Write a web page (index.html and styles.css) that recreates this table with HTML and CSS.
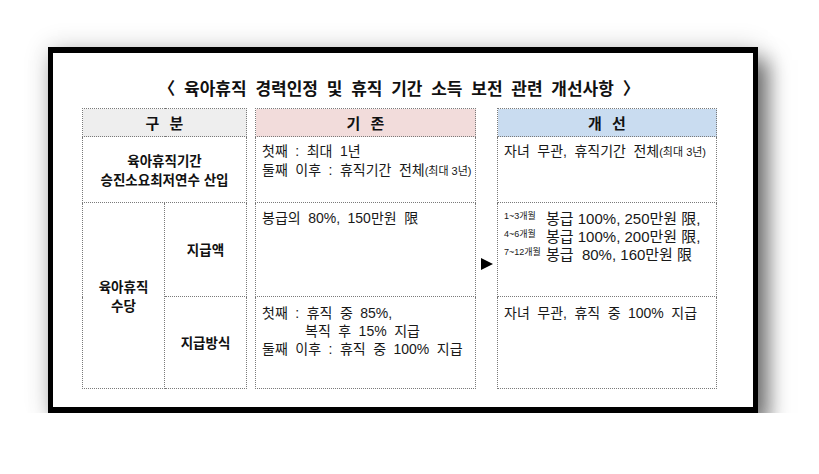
FILE: index.html
```html
<!DOCTYPE html>
<html lang="ko">
<head>
<meta charset="utf-8">
<link rel="stylesheet" href="styles.css">
</head>
<body>
<div class="page">
  <div class="frame">
    <div class="content">
      <div class="title">〈 육아휴직 경력인정 및 휴직 기간 소득 보전 관련 개선사항 〉</div>
      <table class="grid">
        <colgroup>
          <col class="w-a"><col class="w-b"><col class="w-gap"><col class="w-mid"><col class="w-arrow"><col class="w-new">
        </colgroup>
        <tr class="r-head">
          <td colspan="2" class="head head-gray">구 분</td>
          <td rowspan="4" class="gap"></td>
          <td class="head head-pink">기 존</td>
          <td rowspan="4" class="gap arrow-cell">
            <svg class="arrow" width="12" height="12" viewBox="0 0 12 12"><polygon points="0,0 12,6 0,12" fill="#000"/></svg>
          </td>
          <td class="head head-blue">개 선</td>
        </tr>
        <tr class="r-1">
          <td colspan="2" class="label">육아휴직기간<br>승진소요최저연수 산입</td>
          <td class="body p-a">첫째 : 최대 1년<br>둘째 이후 : 휴직기간 전체<span class="small">(최대 3년)</span></td>
          <td class="body p-a">자녀 무관, 휴직기간 전체<span class="small">(최대 3년)</span></td>
        </tr>
        <tr class="r-2">
          <td rowspan="2" class="label">육아휴직<br>수당</td>
          <td class="label">지급액</td>
          <td class="body p-b">봉급의 80%, 150만원 限</td>
          <td class="body p-c">
            <div class="tier"><span class="sup">1~3개월</span><span class="big">봉급 100%, 250만원 限,</span></div>
            <div class="tier"><span class="sup">4~6개월</span><span class="big">봉급 100%, 200만원 限,</span></div>
            <div class="tier"><span class="sup">7~12개월</span><span class="big">봉급 &nbsp;80%, 160만원 限</span></div>
          </td>
        </tr>
        <tr class="r-3">
          <td class="label">지급방식</td>
          <td class="body p-d">첫째 : 휴직 중 85%,<br><span class="indent">복직 후 15% 지급</span><br>둘째 이후 : 휴직 중 100% 지급</td>
          <td class="body p-e">자녀 무관, 휴직 중 100% 지급</td>
        </tr>
      </table>
    </div>
  </div>
</div>
</body>
</html>
```
FILE: styles.css
```css
html, body {
  margin: 0;
  background: #ffffff;
}
body {
  font-family: "Noto Sans CJK KR", "Noto Sans", sans-serif;
  color: #1c1c1c;
}
.page {
  padding: 47px 0 0 48px;
}
.frame {
  box-sizing: content-box;
  width: 700px;
  height: 354px;
  border-style: solid;
  border-color: #000;
  border-width: 6px 5px;
  background: #fff;
  box-shadow: 10px 13px 20px rgba(0, 0, 0, 0.55), 0 0 24px rgba(0, 0, 0, 0.16);
}
.content {
  width: 634px;
  margin-left: 29px;
}
.title {
  margin: 24px 0 10px 0;
  text-align: center;
  font-size: 17px;
  line-height: 21px;
  font-weight: 700;
  word-spacing: 4px;
  color: #111;
  white-space: nowrap;
}
.grid {
  border-collapse: collapse;
  table-layout: fixed;
  width: 634px;
}
.w-a { width: 82px; }
.w-b { width: 82px; }
.w-gap { width: 9px; }
.w-mid { width: 220px; }
.w-arrow { width: 22px; }
.w-new { width: 219px; }
.grid td {
  border: 1px dotted #7a7a7a;
  padding: 0;
  font-size: 14px;
}
.grid td.gap {
  border: none;
}
.r-head { height: 28px; }
.r-1 { height: 66px; }
.r-2 { height: 94px; }
.r-3 { height: 92px; }
.head {
  text-align: center;
  vertical-align: middle;
  font-weight: 700;
  font-size: 15px !important;
  word-spacing: 6px;
  color: #111;
}
.head-gray { background: #eeeeee; }
.head-pink { background: #f2dcdb; }
.head-blue { background: #c9dcf0; }
.label {
  text-align: center;
  vertical-align: middle;
  font-weight: 700;
  font-size: 13.5px !important;
  line-height: 19px;
  color: #111;
}
.body {
  font-family: "Liberation Sans", "Noto Sans CJK KR", sans-serif;
  vertical-align: top;
  padding-left: 6px !important;
  line-height: 19px;
  word-spacing: 3.6px;
  color: #181818;
}
.p-a { padding-top: 5px !important; }
.p-b { padding-top: 6px !important; }
.p-c { padding-top: 7px !important; line-height: 18px; }
.p-d { padding-top: 7px !important; line-height: 18px; }
.p-e { padding-top: 7px !important; }
.small {
  font-size: 11px;
  word-spacing: 0;
}
.indent {
  padding-left: 43px;
}
.tier {
  display: flex;
  align-items: flex-start;
  height: 18px;
}
.sup {
  width: 42px;
  flex: none;
  font-size: 9px;
  line-height: 10px;
  margin-top: 1px;
  word-spacing: 0;
}
.big {
  font-size: 15px;
  line-height: 18px;
  word-spacing: 0;
}
.arrow-cell {
  vertical-align: middle;
  text-align: center;
  padding-top: 30px !important;
}
.arrow {
  display: block;
  margin: 0 auto;
}
```
